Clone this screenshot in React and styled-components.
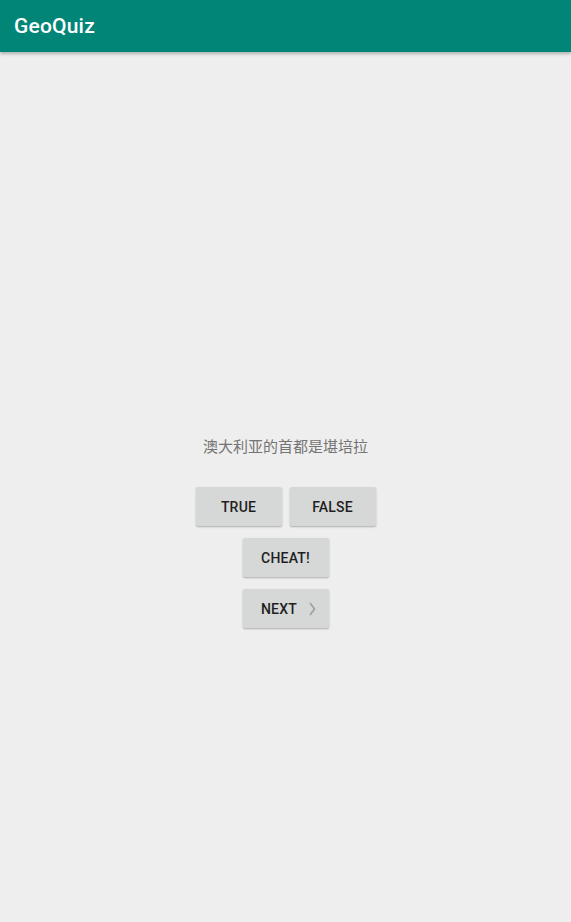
import styled, { createGlobalStyle } from 'styled-components';

const GlobalStyle = createGlobalStyle`
  html, body {
    margin: 0;
    padding: 0;
    background: #eeeeee;
    font-family: Roboto, "Noto Sans CJK SC", sans-serif;
  }
`;

const Screen = styled.div`
  width: 571px;
  height: 922px;
  display: flex;
  flex-direction: column;
  background: #eeeeee;
  overflow: hidden;
`;

const AppBar = styled.header`
  height: 52px;
  flex: 0 0 52px;
  background: #008577;
  display: flex;
  align-items: center;
  padding: 0 14px;
  box-shadow: 0 2px 3px rgba(0, 0, 0, 0.25);
  position: relative;
  z-index: 1;
`;

const Title = styled.h1`
  margin: 0;
  color: #fff;
  font-size: 21px;
  font-weight: 500;
  letter-spacing: 0.2px;
`;

const Body = styled.main`
  flex: 1;
  display: flex;
  flex-direction: column;
  align-items: center;
  padding-top: 383px;
`;

const Question = styled.p`
  margin: 0 0 30px;
  color: #757575;
  font-size: 15px;
  line-height: 22px;
  font-family: "Noto Sans CJK SC", Roboto, sans-serif;
`;

const Row = styled.div`
  display: flex;
  gap: 8px;
  margin-bottom: 12px;
`;

const Button = styled.button`
  width: 86px;
  height: 39px;
  border: none;
  border-radius: 2px;
  background: #d6d7d7;
  color: #1f1f1f;
  font-family: Roboto, sans-serif;
  font-size: 14px;
  font-weight: 500;
  text-transform: uppercase;
  letter-spacing: 0.2px;
  box-shadow: 0 1px 2px rgba(0, 0, 0, 0.28);
  display: flex;
  align-items: center;
  justify-content: center;
  gap: 12px;
  padding: ${(p) => (p.$icon ? '0 0 0 6px' : '0')};
  cursor: pointer;
`;

const Chevron = () => (
  <svg width="7" height="14" viewBox="0 0 7 14">
    <path d="M1 1 L5.5 7 L1 13" fill="none" stroke="#9e9e9e" strokeWidth="1.6" />
  </svg>
);

export default function App() {
  return (
    <>
      <GlobalStyle />
      <Screen>
        <AppBar>
          <Title>GeoQuiz</Title>
        </AppBar>
        <Body>
          <Question>澳大利亚的首都是堪培拉</Question>
          <Row>
            <Button>True</Button>
            <Button>False</Button>
          </Row>
          <Row>
            <Button>Cheat!</Button>
          </Row>
          <Row>
            <Button $icon>
              Next
              <Chevron />
            </Button>
          </Row>
        </Body>
      </Screen>
    </>
  );
}
